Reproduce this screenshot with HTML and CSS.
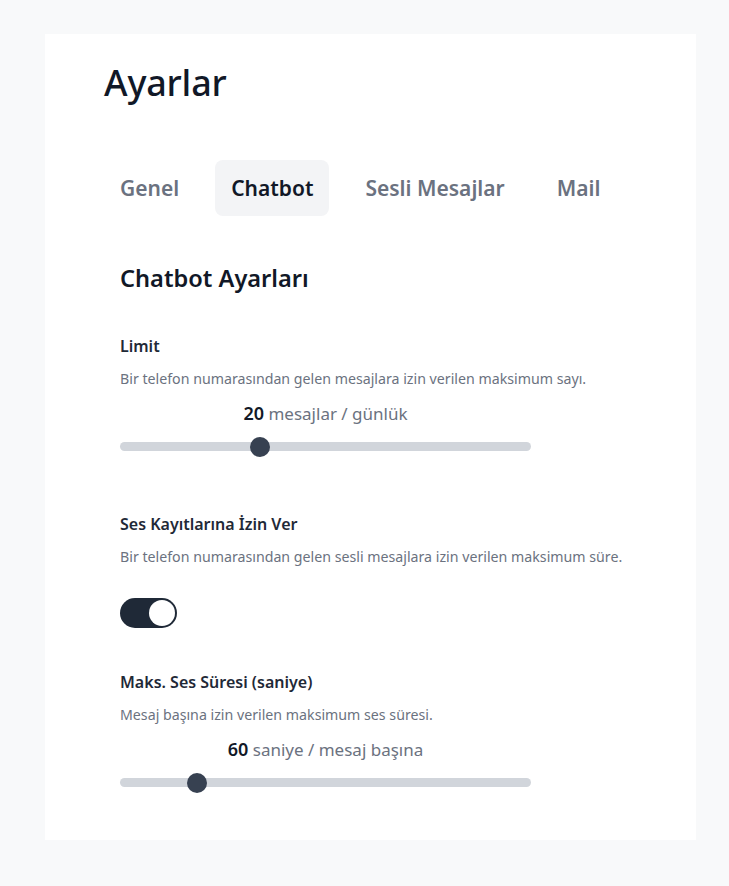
FILE: index.html
```html
<!DOCTYPE html>
<html lang="tr">
<head>
<meta charset="utf-8">
<title>Ayarlar</title>
<link rel="stylesheet" href="styles.css">
</head>
<body>
<main class="card">
  <h1 class="title">Ayarlar</h1>
  <nav class="tabs">
    <a class="tab">Genel</a>
    <a class="tab active">Chatbot</a>
    <a class="tab">Sesli Mesajlar</a>
    <a class="tab">Mail</a>
  </nav>
  <section class="panel">
    <h2 class="panel-title">Chatbot Ayarları</h2>

    <div class="field field-first">
      <h3 class="label">Limit</h3>
      <p class="desc">Bir telefon numarasından gelen mesajlara izin verilen maksimum sayı.</p>
      <div class="range">
        <div class="range-value"><b>20</b> mesajlar / günlük</div>
        <div class="track"><span class="thumb" style="left: 140px"></span></div>
      </div>
    </div>

    <div class="field field-toggle">
      <h3 class="label">Ses Kayıtlarına İzin Ver</h3>
      <p class="desc">Bir telefon numarasından gelen sesli mesajlara izin verilen maksimum süre.</p>
      <div class="toggle on"><span class="knob"></span></div>
    </div>

    <div class="field field-last">
      <h3 class="label">Maks. Ses Süresi (saniye)</h3>
      <p class="desc">Mesaj başına izin verilen maksimum ses süresi.</p>
      <div class="range">
        <div class="range-value"><b>60</b> saniye / mesaj başına</div>
        <div class="track"><span class="thumb" style="left: 77px"></span></div>
      </div>
    </div>
  </section>
</main>
</body>
</html>
```

FILE: styles.css
```css
* { box-sizing: border-box; }
html, body { margin: 0; padding: 0; }
body {
  background: #f8f9fa;
  font-family: "Noto Sans", "Open Sans", sans-serif;
  color: #111827;
  width: 729px;
  height: 886px;
  overflow: hidden;
}
.card {
  margin: 34px 0 0 45px;
  width: 651px;
  height: 806px;
  background: #ffffff;
  padding: 24px 59px 0;
  display: flex;
  flex-direction: column;
}
.title {
  margin: 0;
  font-size: 36px;
  line-height: 50px;
  font-weight: 500;
  color: #111827;
  letter-spacing: -0.2px;
}
.tabs {
  display: flex;
  gap: 20px;
  margin-top: 52px;
}
.tab {
  display: block;
  padding: 12px 16px;
  height: 56px;
  font-size: 21px;
  line-height: 32px;
  font-weight: 600;
  color: #6b7280;
  border-radius: 8px;
}
.tab.active {
  background: #f3f4f6;
  color: #111827;
}
.panel {
  padding-left: 16px;
  display: flex;
  flex-direction: column;
}
.panel-title {
  margin: 46px 0 0;
  font-size: 23.6px;
  line-height: 32px;
  font-weight: 600;
  color: #111827;
}
.field { display: flex; flex-direction: column; }
.field-first { margin-top: 42px; }
.field-toggle { margin-top: 63px; }
.field-last { margin-top: 44px; }
.label {
  margin: 0;
  font-size: 16px;
  line-height: 20px;
  font-weight: 600;
  color: #1f2937;
}
.desc {
  margin: 13px 0 0;
  font-size: 14.2px;
  line-height: 20px;
  color: #6b7280;
}
.range {
  width: 411px;
  display: flex;
  flex-direction: column;
}
.range-value {
  margin-top: 12px;
  text-align: center;
  font-size: 17px;
  line-height: 24px;
  color: #6b7280;
}
.range-value b {
  font-size: 18px;
  font-weight: 600;
  color: #111827;
}
.track {
  position: relative;
  margin-top: 16px;
  height: 9px;
  border-radius: 5px;
  background: #d1d5db;
}
.thumb {
  position: absolute;
  top: -5.5px;
  width: 20px;
  height: 20px;
  margin-left: -10px;
  border-radius: 50%;
  background: #374151;
}
.toggle {
  margin-top: 31px;
  width: 57px;
  height: 30px;
  border-radius: 15px;
  background: #1f2937;
  padding: 2px;
  display: flex;
  justify-content: flex-end;
}
.knob {
  width: 26px;
  height: 26px;
  border-radius: 50%;
  background: #ffffff;
}
```
